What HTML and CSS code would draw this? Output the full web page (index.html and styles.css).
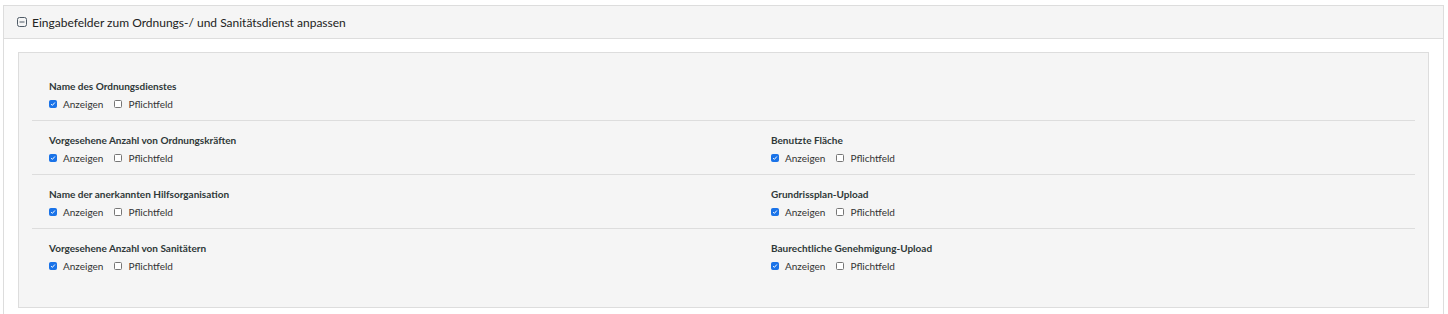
FILE: index.html
```html
<!DOCTYPE html>
<html lang="de">
<head>
    <meta charset="UTF-8">
    <meta name="viewport" content="width=device-width, initial-scale=1.0">
    <title>Eingabefelder anpassen</title>
    <link rel="stylesheet" href="styles.css">
</head>
<body>
    <div class="panel">
        <div class="panel-heading">
            <svg class="toggle-icon" width="10" height="10" viewBox="0 0 10 10">
                <rect x="0.5" y="0.5" width="9" height="9" rx="2" fill="none" stroke="#4f5b66" stroke-width="1"/>
                <line x1="2.5" y1="5" x2="7.5" y2="5" stroke="#4f5b66" stroke-width="1"/>
            </svg>
            <span>Eingabefelder zum Ordnungs-/ und Sanitätsdienst anpassen</span>
        </div>
        <div class="panel-body">
            <div class="field-box">
                <!-- Zeile 1 -->
                <div class="field-row">
                    <div class="field">
                        <div class="field-label">Name des Ordnungsdienstes</div>
                        <div class="field-options">
                            <label><input type="checkbox" checked> Anzeigen</label>
                            <label><input type="checkbox"> Pflichtfeld</label>
                        </div>
                    </div>
                    <div class="field"></div>
                </div>
                <!-- Zeile 2 -->
                <div class="field-row">
                    <div class="field">
                        <div class="field-label">Vorgesehene Anzahl von Ordnungskräften</div>
                        <div class="field-options">
                            <label><input type="checkbox" checked> Anzeigen</label>
                            <label><input type="checkbox"> Pflichtfeld</label>
                        </div>
                    </div>
                    <div class="field">
                        <div class="field-label">Benutzte Fläche</div>
                        <div class="field-options">
                            <label><input type="checkbox" checked> Anzeigen</label>
                            <label><input type="checkbox"> Pflichtfeld</label>
                        </div>
                    </div>
                </div>
                <!-- Zeile 3 -->
                <div class="field-row">
                    <div class="field">
                        <div class="field-label">Name der anerkannten Hilfsorganisation</div>
                        <div class="field-options">
                            <label><input type="checkbox" checked> Anzeigen</label>
                            <label><input type="checkbox"> Pflichtfeld</label>
                        </div>
                    </div>
                    <div class="field">
                        <div class="field-label">Grundrissplan-Upload</div>
                        <div class="field-options">
                            <label><input type="checkbox" checked> Anzeigen</label>
                            <label><input type="checkbox"> Pflichtfeld</label>
                        </div>
                    </div>
                </div>
                <!-- Zeile 4 -->
                <div class="field-row">
                    <div class="field">
                        <div class="field-label">Vorgesehene Anzahl von Sanitätern</div>
                        <div class="field-options">
                            <label><input type="checkbox" checked> Anzeigen</label>
                            <label><input type="checkbox"> Pflichtfeld</label>
                        </div>
                    </div>
                    <div class="field">
                        <div class="field-label">Baurechtliche Genehmigung-Upload</div>
                        <div class="field-options">
                            <label><input type="checkbox" checked> Anzeigen</label>
                            <label><input type="checkbox"> Pflichtfeld</label>
                        </div>
                    </div>
                </div>
            </div>
        </div>
    </div>
</body>
</html>
```

FILE: styles.css
```css
body {
    margin: 0;
    padding: 5px 4px 0 3px;
    font-family: Lato, "Noto Sans", sans-serif;
    color: #333;
    background: #fff;
}
.panel {
    border: 1px solid #ddd;
    border-bottom: none;
    height: 320px;
}
.panel-heading {
    display: flex;
    align-items: center;
    gap: 5px;
    height: 32px;
    padding: 0 13px;
    background-color: #f5f5f5;
    border-bottom: 1px solid #ddd;
    font-size: 12px;
    color: #222;
}
.toggle-icon {
    display: block;
    flex: none;
}
.panel-body {
    padding: 13px 14px;
}
.field-box {
    background-color: #f5f5f5;
    border: 1px solid #ddd;
    padding: 14px 13px 25px;
}
.field-row {
    display: grid;
    grid-template-columns: 722px 1fr;
    padding: 12px 17px 9px;
    border-top: 1px solid #ddd;
}
.field-row:first-child {
    border-top: none;
}
.field-label {
    font-size: 10px;
    font-weight: bold;
    line-height: 14px;
    margin-bottom: 4px;
    color: #2f3838;
}
.field-options {
    display: flex;
    gap: 11px;
    font-size: 10px;
    line-height: 14px;
    color: #333;
}
.field-options label {
    display: flex;
    align-items: center;
    gap: 6px;
}
.field-options input {
    appearance: none;
    flex: none;
    width: 8px;
    height: 8px;
    margin: 0;
    border: 1px solid #767676;
    border-radius: 1.5px;
    background: #fff;
}
.field-options input:checked {
    border-color: #1a73e8;
    background: #1a73e8 url("data:image/svg+xml,%3Csvg xmlns='http://www.w3.org/2000/svg' viewBox='0 0 8 8'%3E%3Cpath d='M1.5 4.2 3.2 5.8 6.5 2' fill='none' stroke='white' stroke-width='1.3'/%3E%3C/svg%3E") center / 100% no-repeat;
}
```
